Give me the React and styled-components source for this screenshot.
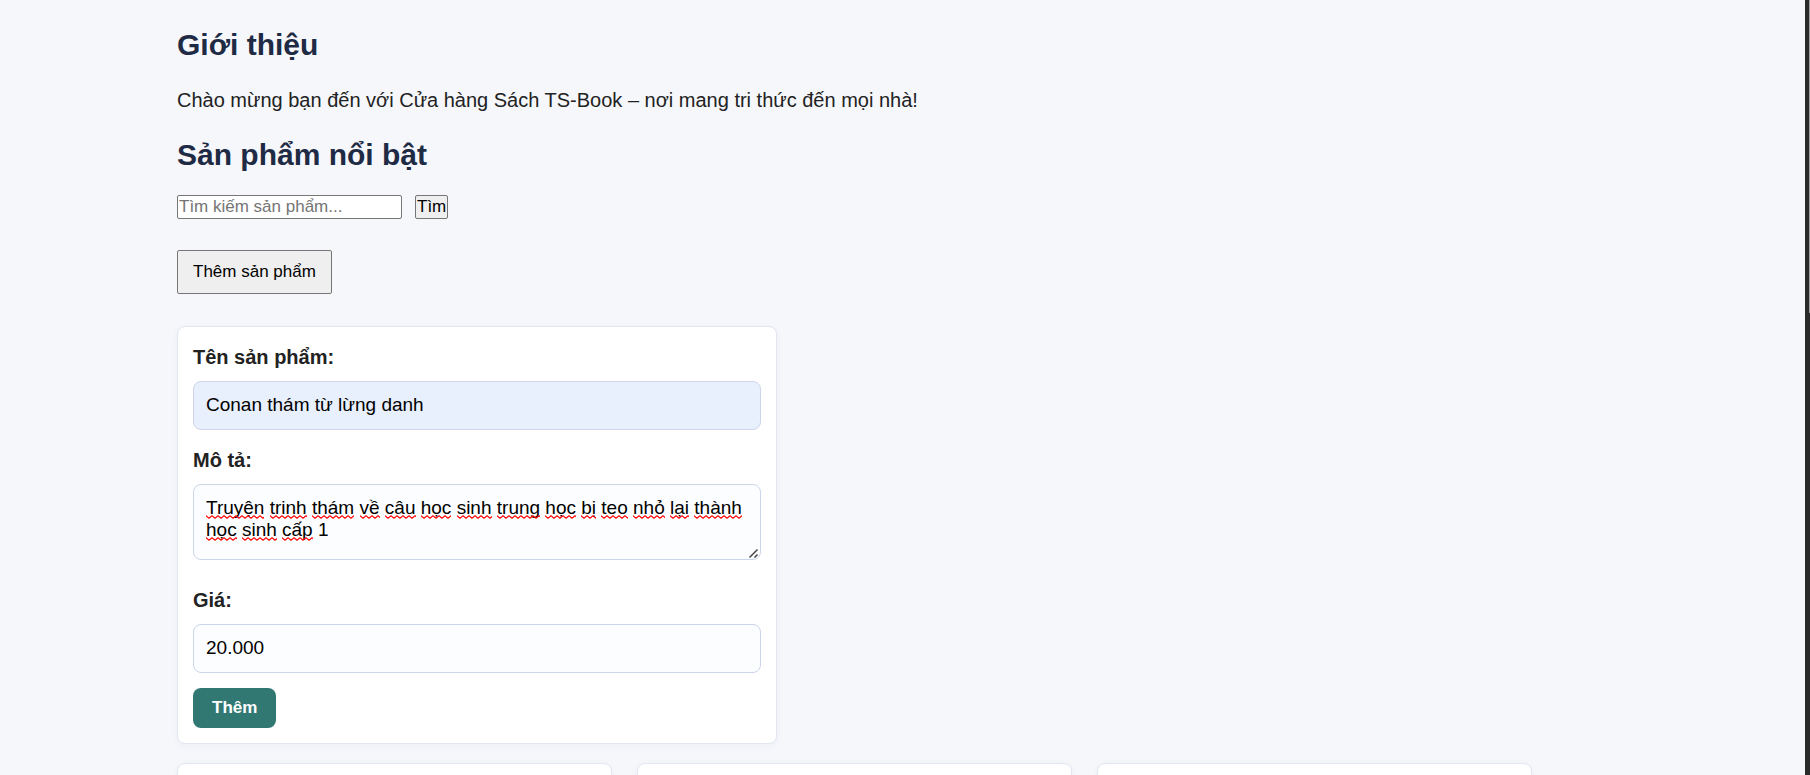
import React, { useState } from "react";
import styled, { createGlobalStyle } from "styled-components";

const GlobalStyle = createGlobalStyle`
  *, *::before, *::after { box-sizing: border-box; }
  body {
    margin: 0;
    background: #f5f7fb;
    color: #222;
    font-family: "Liberation Sans", Arial, sans-serif;
    font-size: 20px;
    line-height: 32px;
  }
`;

const Shell = styled.div`
  display: flex;
  height: 100vh;
  overflow: hidden;
`;

const Main = styled.main`
  flex: 1;
  min-width: 0;
  padding: 28px 273px 0 177px;
  overflow: hidden;
`;

const ScrollRail = styled.div`
  flex: 0 0 5px;
  display: flex;
  justify-content: flex-end;
  background: #2b2b2b;
`;

const ScrollThumb = styled.div`
  width: 1px;
  height: 313px;
  background: #9f9f9f;
`;

const Heading = styled.h2`
  margin: 0 0 22px;
  color: #1f2a44;
  font-size: 30px;
  line-height: 34px;
`;

const Intro = styled.p`
  margin: 0 0 22px;
`;

const SearchBar = styled.form`
  display: flex;
  gap: 13px;
  height: 24px;
  margin-top: 23px;
  margin-bottom: 31px;
`;

const SearchInput = styled.input`
  width: 225px;
  padding: 1px;
  border: 1px solid #767676;
  border-radius: 2px;
  background: #fff;
  font: 17px "Liberation Sans", Arial, sans-serif;

  &::placeholder { color: #757575; }
`;

const PlainButton = styled.button`
  display: block;
  padding: ${(p) => (p.$roomy ? "0 15px" : "0 1px")};
  height: ${(p) => (p.$roomy ? "44px" : "24px")};
  border: 1px solid #767676;
  border-radius: 2px;
  background: #efefef;
  color: #000;
  font: 17px "Liberation Sans", Arial, sans-serif;
`;

const Card = styled.div`
  border: 1px solid #e2e6f0;
  border-radius: 8px;
  background: #fff;
  box-shadow: 0 2px 8px rgba(30, 40, 90, 0.04);
`;

const ProductForm = styled(Card)`
  max-width: 600px;
  margin: 32px 0 19px;
  padding: 15px;
`;

const Label = styled.label`
  display: block;
  margin-bottom: 9px;
  font-weight: bold;
  line-height: 30px;
`;

const Field = styled.input`
  display: block;
  width: 100%;
  height: 49px;
  margin-bottom: 15px;
  padding: 0 12px 2px;
  border: 1px solid #cdd5ea;
  border-radius: 8px;
  background: ${(p) => (p.$filled ? "#e8effd" : "#fcfdff")};
  color: #000;
  font: 19px "Liberation Sans", Arial, sans-serif;
`;

const AreaWrap = styled.div`
  position: relative;
  height: 76px;
  margin-bottom: 25px;
`;

const Area = styled.textarea`
  display: block;
  width: 100%;
  height: 100%;
  padding: 12px;
  border: 1px solid #cdd5ea;
  border-radius: 8px;
  background: #fcfdff;
  color: #000;
  font: 19px/22px "Liberation Sans", Arial, sans-serif;
  resize: vertical;

  &::-webkit-resizer {
    background: url("data:image/svg+xml,%3Csvg xmlns='http://www.w3.org/2000/svg' width='15' height='15'%3E%3Cpath d='M4.5 13.5l8-8M9.5 13.5l3-3' stroke='%23444' stroke-width='1.5' fill='none'/%3E%3C/svg%3E") right bottom no-repeat;
  }
`;

const SpellLayer = styled.div`
  position: absolute;
  inset: 0;
  padding: 13px;
  color: transparent;
  font: 19px/22px "Liberation Sans", Arial, sans-serif;
  white-space: pre-wrap;
  pointer-events: none;
`;

const Misspelt = styled.span`
  padding-bottom: 1px;
  background: url("data:image/svg+xml,%3Csvg xmlns='http://www.w3.org/2000/svg' width='6' height='4'%3E%3Cpath d='M-3 3.2L0 .8L3 3.2L6 .8L9 3.2' stroke='red' stroke-width='1.1' stroke-linejoin='round' fill='none'/%3E%3C/svg%3E") left bottom repeat-x;
`;

const SubmitButton = styled.button`
  display: block;
  height: 40px;
  padding: 0 19px;
  border: 0;
  border-radius: 8px;
  background: #317873;
  color: #fff;
  font: bold 17px "Liberation Sans", Arial, sans-serif;
`;

const ProductGrid = styled.div`
  display: grid;
  grid-template-columns: repeat(3, 1fr);
  gap: 25px;
`;

const ProductCard = styled(Card)`
  min-height: 320px;
`;

export default function App() {
  const [description, setDescription] = useState(
    "Truyện trinh thám về câu học sinh trung học bị teo nhỏ lại thành học sinh cấp 1"
  );

  return (
    <>
      <GlobalStyle />
      <Shell>
        <Main>
          <Heading>Giới thiệu</Heading>
          <Intro>Chào mừng bạn đến với Cửa hàng Sách TS-Book – nơi mang tri thức đến mọi nhà!</Intro>
          <Heading>Sản phẩm nổi bật</Heading>
          <SearchBar onSubmit={(e) => e.preventDefault()}>
            <SearchInput type="text" aria-label="Tìm kiếm sản phẩm" placeholder="Tìm kiếm sản phẩm..." />
            <PlainButton type="submit">Tìm</PlainButton>
          </SearchBar>
          <PlainButton type="button" $roomy>Thêm sản phẩm</PlainButton>
          <ProductForm as="form" onSubmit={(e) => e.preventDefault()}>
            <Label htmlFor="name">Tên sản phẩm:</Label>
            <Field id="name" type="text" defaultValue="Conan thám từ lừng danh" $filled />
            <Label htmlFor="description">Mô tả:</Label>
            <AreaWrap>
              <Area
                id="description"
                spellCheck={false}
                value={description}
                onChange={(e) => setDescription(e.target.value)}
              />
              <SpellLayer aria-hidden="true">
                {description.split(/(\s+)/).map((part, i) =>
                  /\p{L}/u.test(part) ? <Misspelt key={i}>{part}</Misspelt> : part
                )}
              </SpellLayer>
            </AreaWrap>
            <Label htmlFor="price">Giá:</Label>
            <Field id="price" type="text" defaultValue="20.000" />
            <SubmitButton type="submit">Thêm</SubmitButton>
          </ProductForm>
          <ProductGrid>
            <ProductCard />
            <ProductCard />
            <ProductCard />
          </ProductGrid>
        </Main>
        <ScrollRail aria-hidden="true">
          <ScrollThumb />
        </ScrollRail>
      </Shell>
    </>
  );
}
